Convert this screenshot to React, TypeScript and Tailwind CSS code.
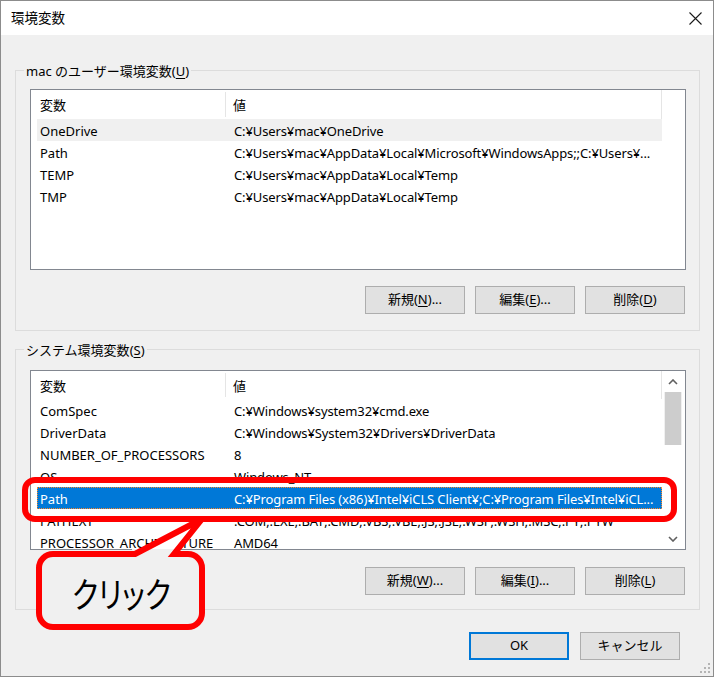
import React from "react";

type Row = { name: string; value: string; state?: "hover" | "selected" };

const userRows: Row[] = [
  { name: "OneDrive", value: "C:¥Users¥mac¥OneDrive", state: "hover" },
  { name: "Path", value: "C:¥Users¥mac¥AppData¥Local¥Microsoft¥WindowsApps;;C:¥Users¥..." },
  { name: "TEMP", value: "C:¥Users¥mac¥AppData¥Local¥Temp" },
  { name: "TMP", value: "C:¥Users¥mac¥AppData¥Local¥Temp" },
];

const sysRows: Row[] = [
  { name: "ComSpec", value: "C:¥Windows¥system32¥cmd.exe" },
  { name: "DriverData", value: "C:¥Windows¥System32¥Drivers¥DriverData" },
  { name: "NUMBER_OF_PROCESSORS", value: "8" },
  { name: "OS", value: "Windows_NT" },
  { name: "Path", value: "C:¥Program Files (x86)¥Intel¥iCLS Client¥;C:¥Program Files¥Intel¥iCL...", state: "selected" },
  { name: "PATHEXT", value: ".COM;.EXE;.BAT;.CMD;.VBS;.VBE;.JS;.JSE;.WSF;.WSH;.MSC;.PY;.PYW" },
  { name: "PROCESSOR_ARCHITECTURE", value: "AMD64" },
];

function Btn({ label, mn, rest, primary }: { label: string; mn: string; rest: string; primary?: boolean }) {
  return (
    <div
      className={
        "h-[28px] w-[100px] flex items-center justify-center bg-[#e1e1e1] " +
        (primary ? "border-2 border-[#0078d7]" : "border border-[#adadad]")
      }
    >
      <span>
        {label}
        {mn !== "" && (
          <>
            (<span className="underline underline-offset-2">{mn}</span>)
          </>
        )}
        {rest}
      </span>
    </div>
  );
}

function ListView({ rows, headerH, height, scroll }: { rows: Row[]; headerH: string; height: string; scroll?: boolean }) {
  return (
    <div className={"w-[656px] border border-[#828790] bg-white flex overflow-hidden " + height}>
      <div className="w-[6px] shrink-0" />
      <div className="w-[625px] shrink-0 flex flex-col">
        <div className={"flex shrink-0 border-r border-[#e5e5e5] " + headerH}>
          <div className="w-[189px] shrink-0 flex items-center pl-[3px] pt-[3px] border-r border-[#e5e5e5] my-[2px]">変数</div>
          <div className="flex-1 flex items-center pl-[7px] pt-[3px]">値</div>
        </div>
        {rows.map((r, i) => (
          <div
            key={i}
            className={
              "flex h-[22px] shrink-0 leading-[22px] pt-[1px] whitespace-nowrap " +
              (r.state === "hover" ? "bg-[#f0f0f0] " : "") +
              (r.state === "selected"
                ? "bg-[#0078d7] text-white outline outline-1 outline-dotted outline-[#ff8728] -outline-offset-1 "
                : "")
            }
          >
            <div className="w-[189px] shrink-0 pl-[3px] overflow-hidden">{r.name}</div>
            <div className="flex-1 pl-[8px] overflow-hidden tracking-[-0.12px]">{r.value}</div>
          </div>
        ))}
      </div>
      {scroll ? (
        <div className="ml-[2px] w-[18px] shrink-0 flex flex-col bg-[#f0f0f0]">
          <div className="h-[21px] flex items-center justify-center bg-white">
            <svg width="10" height="6" viewBox="0 0 10 6">
              <path d="M1 5 L5 1 L9 5" fill="none" stroke="#606060" strokeWidth="1.6" />
            </svg>
          </div>
          <div className="h-[53px] bg-[#cdcdcd] mx-[1px]" />
          <div className="flex-1 bg-white" />
          <div className="h-[21px] flex items-center justify-center bg-white">
            <svg width="10" height="6" viewBox="0 0 10 6">
              <path d="M1 1 L5 5 L9 1" fill="none" stroke="#606060" strokeWidth="1.6" />
            </svg>
          </div>
        </div>
      ) : null}
    </div>
  );
}

function Group({ label, mn, children, className }: { label: string; mn: string; children: React.ReactNode; className: string }) {
  return (
    <div className={"relative border border-[#dcdcdc] " + className}>
      <div className="absolute -top-[9px] left-[8px] px-[2px] bg-[#f0f0f0] leading-[18px]">
        {label}(<span className="underline underline-offset-2">{mn}</span>)
      </div>
      {children}
    </div>
  );
}

export default function App() {
  return (
    <div className="relative w-[714px] h-[677px] overflow-hidden bg-[#f0f0f0] border border-[#8c8c8c] text-[13px] text-black font-['Noto_Sans','Noto_Sans_CJK_JP',sans-serif] flex flex-col">
      {/* title bar */}
      <div className="h-[34px] shrink-0 bg-white flex items-center justify-between pl-[10px] pr-[11px]">
        <span className="text-[13.5px]">環境変数</span>
        <svg width="13" height="13" viewBox="0 0 13 13">
          <path d="M0.5 0.5 L12.5 12.5 M12.5 0.5 L0.5 12.5" stroke="#1a1a1a" strokeWidth="1.1" />
        </svg>
      </div>

      <div className="flex flex-col pl-[14px] pt-[35px]">
        <Group label="mac のユーザー環境変数" mn="U" className="w-[685px] pl-[14px] pt-[18px] pb-[16px] flex flex-col">
          <ListView rows={userRows} headerH="h-[29px]" height="h-[181px]" />
          <div className="w-[655px] flex justify-end gap-[10px] mt-[16px]">
            <Btn label="新規" mn="N" rest="..." />
            <Btn label="編集" mn="E" rest="..." />
            <Btn label="削除" mn="D" rest="" />
          </div>
        </Group>

        <Group label="システム環境変数" mn="S" className="w-[685px] mt-[18px] pl-[14px] pt-[20px] pb-[14px] flex flex-col">
          <ListView rows={sysRows} headerH="h-[28px]" height="h-[180px]" scroll />
          <div className="w-[655px] flex justify-end gap-[10px] mt-[17px]">
            <Btn label="新規" mn="W" rest="..." />
            <Btn label="編集" mn="I" rest="..." />
            <Btn label="削除" mn="L" rest="" />
          </div>
        </Group>

        <div className="w-[665px] flex justify-end gap-[11px] mt-[22px]">
          <Btn label="OK" mn="" rest="" primary />
          <Btn label="キャンセル" mn="" rest="" />
        </div>
      </div>

      {/* resize grip */}
      <svg className="absolute right-[2px] bottom-[2px]" width="12" height="12" viewBox="0 0 12 12">
        <rect x="9" y="1" width="2" height="2" fill="#b4b4b4" />
        <rect x="9" y="5" width="2" height="2" fill="#b4b4b4" />
        <rect x="5" y="5" width="2" height="2" fill="#b4b4b4" />
        <rect x="9" y="9" width="2" height="2" fill="#b4b4b4" />
        <rect x="5" y="9" width="2" height="2" fill="#b4b4b4" />
        <rect x="1" y="9" width="2" height="2" fill="#b4b4b4" />
      </svg>

      {/* red callout overlay */}
      <svg className="absolute left-[-1px] top-[-1px] pointer-events-none" width="714" height="677" viewBox="0 0 714 677">
        <rect x="25" y="480" width="649" height="39" rx="10" ry="10" fill="none" stroke="#ff0000" strokeWidth="6" />
        <path d="M135 554 L202 519 L174 554 Z" fill="#ffffff" />
        <rect x="39" y="554" width="163" height="73" rx="14" ry="14" fill="#f0f0f0" />
        <rect x="132" y="549" width="48" height="8" fill="#f0f0f0" />
        <path d="M135 554 L202 519 L174 554 L188 554 A14 14 0 0 1 202 568 L202 613 A14 14 0 0 1 188 627 L53 627 A14 14 0 0 1 39 613 L39 568 A14 14 0 0 1 53 554 Z" fill="none" stroke="#ff0000" strokeWidth="6" strokeLinejoin="miter" />
      </svg>
      <div className="absolute left-[36px] top-[551px] w-[169px] h-[79px] flex items-center justify-center pt-[2px]">
        <span className="text-[35px] leading-none font-['Noto_Sans_CJK_JP',sans-serif] [font-feature-settings:'palt'] scale-x-[0.83] inline-block">
          クリック
        </span>
      </div>
    </div>
  );
}
